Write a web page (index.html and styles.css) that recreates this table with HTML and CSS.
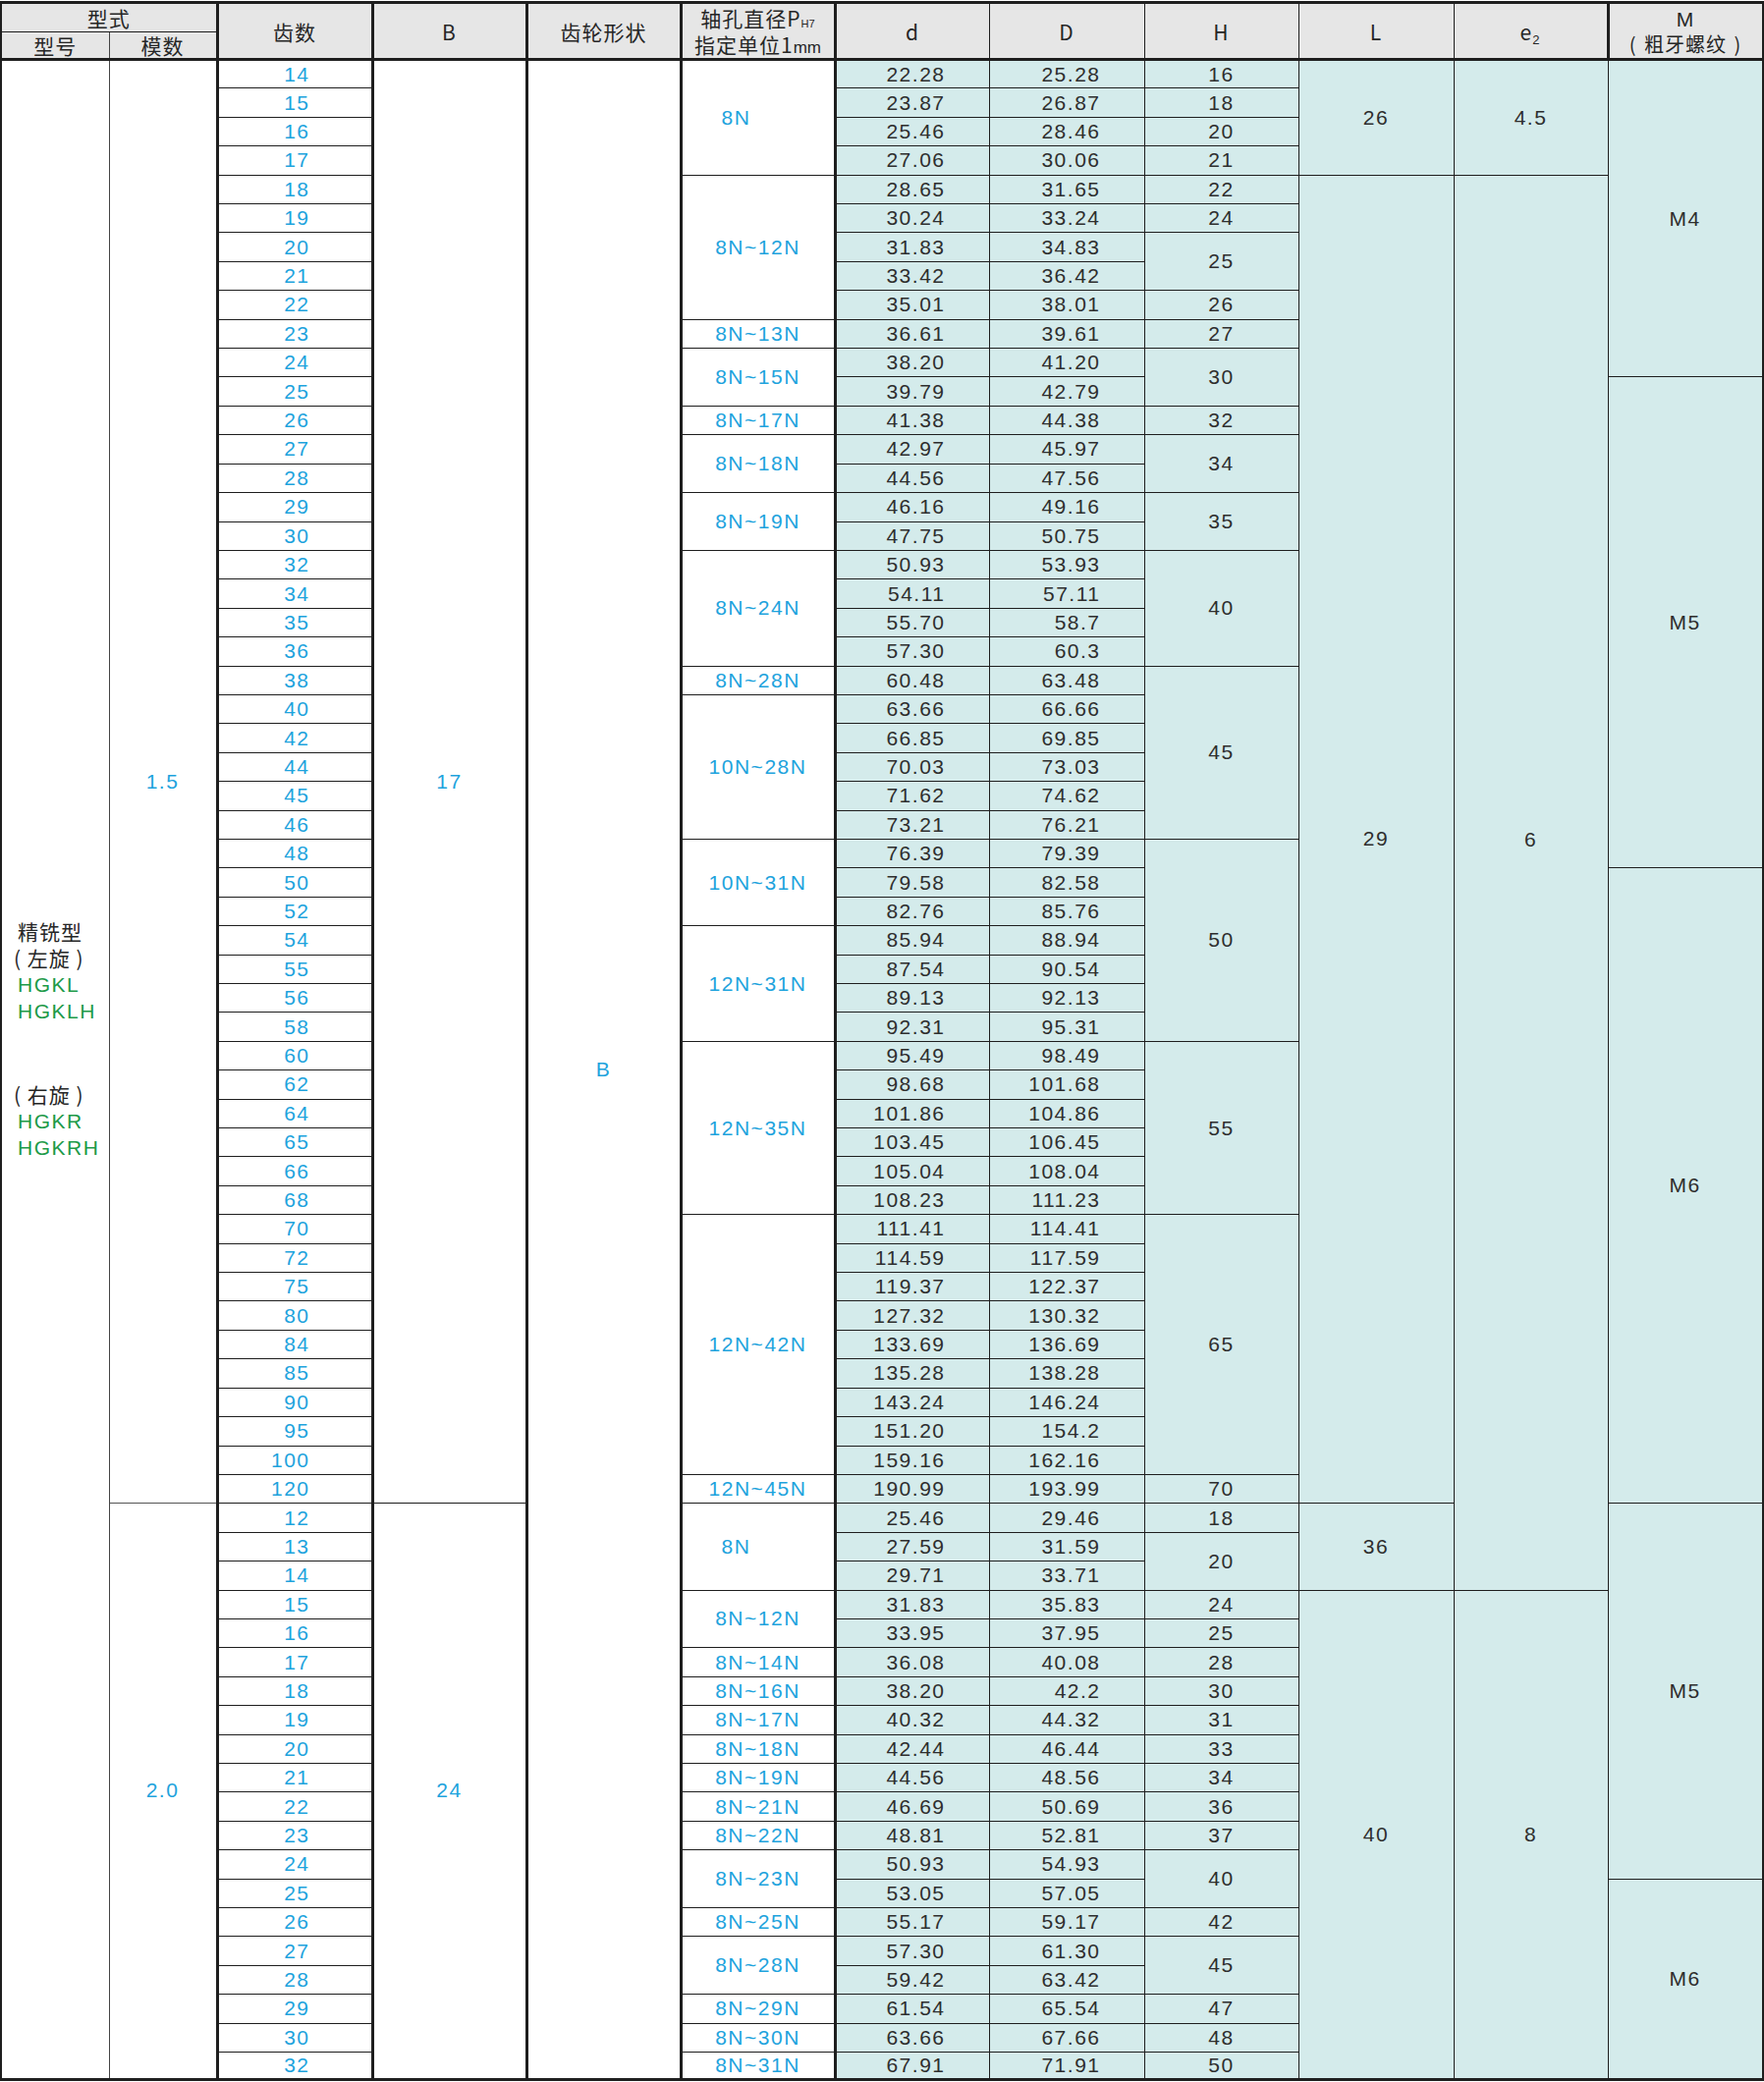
FILE: index.html
```html
<!DOCTYPE html>
<html lang="zh-CN">
<head>
<meta charset="utf-8">
<title>齿轮规格表</title>
<link rel="stylesheet" href="styles.css">
</head>
<body>
<table class="spec">
<colgroup>
<col class="w-type"><col class="w-mod"><col class="w-wide"><col class="w-std"><col class="w-std"><col class="w-std"><col class="w-std"><col class="w-wide"><col class="w-std"><col class="w-wide"><col class="w-std"><col class="w-wide">
</colgroup>
<thead>
<tr class="h1">
<th colspan="2" class="h-top">型式</th>
<th rowspan="2" class="thick">齿数</th>
<th rowspan="2" class="thick">B</th>
<th rowspan="2" class="thick">齿轮形状</th>
<th rowspan="2" class="thick h-bore">轴孔直径P<span class="sub">H7</span><br>指定单位1<span class="mm">mm</span></th>
<th rowspan="2">d</th>
<th rowspan="2">D</th>
<th rowspan="2">H</th>
<th rowspan="2">L</th>
<th rowspan="2">e<span class="sub2">2</span></th>
<th rowspan="2" class="thick h-m"><span class="m-top">M</span><br><span class="m-sub">( 粗牙螺纹 )</span></th>
</tr>
<tr class="h2">
<th class="thin-r">型号</th>
<th>模数</th>
</tr>
</thead>
<tbody>
<tr><td rowspan="70" class="type"><div class="type-text"><div>精铣型</div><div class="paren">( 左旋 )</div><div class="grn">HGKL</div><div class="grn">HGKLH</div><div class="paren gap">( 右旋 )</div><div class="grn">HGKR</div><div class="grn">HGKRH</div></div></td><td rowspan="50" class="mod blu">1.5</td><td class="tn">14</td><td rowspan="50" class="bcol blu">17</td><td rowspan="70" class="shape blu">B</td><td rowspan="4" class="bore solo">8N</td><td class="nd">22.28</td><td class="nd">25.28</td><td class="h">16</td><td rowspan="4" class="c">26</td><td rowspan="4" class="c">4.5</td><td rowspan="11" class="m">M4</td></tr>
<tr><td class="tn">15</td><td class="nd">23.87</td><td class="nd">26.87</td><td class="h">18</td></tr>
<tr><td class="tn">16</td><td class="nd">25.46</td><td class="nd">28.46</td><td class="h">20</td></tr>
<tr><td class="tn">17</td><td class="nd">27.06</td><td class="nd">30.06</td><td class="h">21</td></tr>
<tr><td class="tn">18</td><td rowspan="5" class="bore">8N~12N</td><td class="nd">28.65</td><td class="nd">31.65</td><td class="h">22</td><td rowspan="46" class="c">29</td><td rowspan="49" class="c e6">6</td></tr>
<tr><td class="tn">19</td><td class="nd">30.24</td><td class="nd">33.24</td><td class="h">24</td></tr>
<tr><td class="tn">20</td><td class="nd">31.83</td><td class="nd">34.83</td><td rowspan="2" class="h">25</td></tr>
<tr><td class="tn">21</td><td class="nd">33.42</td><td class="nd">36.42</td></tr>
<tr><td class="tn">22</td><td class="nd">35.01</td><td class="nd">38.01</td><td class="h">26</td></tr>
<tr><td class="tn">23</td><td class="bore">8N~13N</td><td class="nd">36.61</td><td class="nd">39.61</td><td class="h">27</td></tr>
<tr><td class="tn">24</td><td rowspan="2" class="bore">8N~15N</td><td class="nd">38.20</td><td class="nd">41.20</td><td rowspan="2" class="h">30</td></tr>
<tr><td class="tn">25</td><td class="nd">39.79</td><td class="nd">42.79</td><td rowspan="17" class="m">M5</td></tr>
<tr><td class="tn">26</td><td class="bore">8N~17N</td><td class="nd">41.38</td><td class="nd">44.38</td><td class="h">32</td></tr>
<tr><td class="tn">27</td><td rowspan="2" class="bore">8N~18N</td><td class="nd">42.97</td><td class="nd">45.97</td><td rowspan="2" class="h">34</td></tr>
<tr><td class="tn">28</td><td class="nd">44.56</td><td class="nd">47.56</td></tr>
<tr><td class="tn">29</td><td rowspan="2" class="bore">8N~19N</td><td class="nd">46.16</td><td class="nd">49.16</td><td rowspan="2" class="h">35</td></tr>
<tr><td class="tn">30</td><td class="nd">47.75</td><td class="nd">50.75</td></tr>
<tr><td class="tn">32</td><td rowspan="4" class="bore">8N~24N</td><td class="nd">50.93</td><td class="nd">53.93</td><td rowspan="4" class="h">40</td></tr>
<tr><td class="tn">34</td><td class="nd">54.11</td><td class="nd">57.11</td></tr>
<tr><td class="tn">35</td><td class="nd">55.70</td><td class="nd">58.7</td></tr>
<tr><td class="tn">36</td><td class="nd">57.30</td><td class="nd">60.3</td></tr>
<tr><td class="tn">38</td><td class="bore">8N~28N</td><td class="nd">60.48</td><td class="nd">63.48</td><td rowspan="6" class="h">45</td></tr>
<tr><td class="tn">40</td><td rowspan="5" class="bore">10N~28N</td><td class="nd">63.66</td><td class="nd">66.66</td></tr>
<tr><td class="tn">42</td><td class="nd">66.85</td><td class="nd">69.85</td></tr>
<tr><td class="tn">44</td><td class="nd">70.03</td><td class="nd">73.03</td></tr>
<tr><td class="tn">45</td><td class="nd">71.62</td><td class="nd">74.62</td></tr>
<tr><td class="tn">46</td><td class="nd">73.21</td><td class="nd">76.21</td></tr>
<tr><td class="tn">48</td><td rowspan="3" class="bore">10N~31N</td><td class="nd">76.39</td><td class="nd">79.39</td><td rowspan="7" class="h">50</td></tr>
<tr><td class="tn">50</td><td class="nd">79.58</td><td class="nd">82.58</td><td rowspan="22" class="m">M6</td></tr>
<tr><td class="tn">52</td><td class="nd">82.76</td><td class="nd">85.76</td></tr>
<tr><td class="tn">54</td><td rowspan="4" class="bore">12N~31N</td><td class="nd">85.94</td><td class="nd">88.94</td></tr>
<tr><td class="tn">55</td><td class="nd">87.54</td><td class="nd">90.54</td></tr>
<tr><td class="tn">56</td><td class="nd">89.13</td><td class="nd">92.13</td></tr>
<tr><td class="tn">58</td><td class="nd">92.31</td><td class="nd">95.31</td></tr>
<tr><td class="tn">60</td><td rowspan="6" class="bore">12N~35N</td><td class="nd">95.49</td><td class="nd">98.49</td><td rowspan="6" class="h">55</td></tr>
<tr><td class="tn">62</td><td class="nd">98.68</td><td class="nd">101.68</td></tr>
<tr><td class="tn">64</td><td class="nd">101.86</td><td class="nd">104.86</td></tr>
<tr><td class="tn">65</td><td class="nd">103.45</td><td class="nd">106.45</td></tr>
<tr><td class="tn">66</td><td class="nd">105.04</td><td class="nd">108.04</td></tr>
<tr><td class="tn">68</td><td class="nd">108.23</td><td class="nd">111.23</td></tr>
<tr><td class="tn">70</td><td rowspan="9" class="bore">12N~42N</td><td class="nd">111.41</td><td class="nd">114.41</td><td rowspan="9" class="h">65</td></tr>
<tr><td class="tn">72</td><td class="nd">114.59</td><td class="nd">117.59</td></tr>
<tr><td class="tn">75</td><td class="nd">119.37</td><td class="nd">122.37</td></tr>
<tr><td class="tn">80</td><td class="nd">127.32</td><td class="nd">130.32</td></tr>
<tr><td class="tn">84</td><td class="nd">133.69</td><td class="nd">136.69</td></tr>
<tr><td class="tn">85</td><td class="nd">135.28</td><td class="nd">138.28</td></tr>
<tr><td class="tn">90</td><td class="nd">143.24</td><td class="nd">146.24</td></tr>
<tr><td class="tn">95</td><td class="nd">151.20</td><td class="nd">154.2</td></tr>
<tr><td class="tn">100</td><td class="nd">159.16</td><td class="nd">162.16</td></tr>
<tr><td class="tn">120</td><td class="bore">12N~45N</td><td class="nd">190.99</td><td class="nd">193.99</td><td class="h">70</td></tr>
<tr><td rowspan="20" class="mod blu">2.0</td><td class="tn">12</td><td rowspan="20" class="bcol blu">24</td><td rowspan="3" class="bore solo">8N</td><td class="nd">25.46</td><td class="nd">29.46</td><td class="h">18</td><td rowspan="3" class="c">36</td><td rowspan="13" class="m">M5</td></tr>
<tr><td class="tn">13</td><td class="nd">27.59</td><td class="nd">31.59</td><td rowspan="2" class="h">20</td></tr>
<tr><td class="tn">14</td><td class="nd">29.71</td><td class="nd">33.71</td></tr>
<tr><td class="tn">15</td><td rowspan="2" class="bore">8N~12N</td><td class="nd">31.83</td><td class="nd">35.83</td><td class="h">24</td><td rowspan="17" class="c">40</td><td rowspan="17" class="c">8</td></tr>
<tr><td class="tn">16</td><td class="nd">33.95</td><td class="nd">37.95</td><td class="h">25</td></tr>
<tr><td class="tn">17</td><td class="bore">8N~14N</td><td class="nd">36.08</td><td class="nd">40.08</td><td class="h">28</td></tr>
<tr><td class="tn">18</td><td class="bore">8N~16N</td><td class="nd">38.20</td><td class="nd">42.2</td><td class="h">30</td></tr>
<tr><td class="tn">19</td><td class="bore">8N~17N</td><td class="nd">40.32</td><td class="nd">44.32</td><td class="h">31</td></tr>
<tr><td class="tn">20</td><td class="bore">8N~18N</td><td class="nd">42.44</td><td class="nd">46.44</td><td class="h">33</td></tr>
<tr><td class="tn">21</td><td class="bore">8N~19N</td><td class="nd">44.56</td><td class="nd">48.56</td><td class="h">34</td></tr>
<tr><td class="tn">22</td><td class="bore">8N~21N</td><td class="nd">46.69</td><td class="nd">50.69</td><td class="h">36</td></tr>
<tr><td class="tn">23</td><td class="bore">8N~22N</td><td class="nd">48.81</td><td class="nd">52.81</td><td class="h">37</td></tr>
<tr><td class="tn">24</td><td rowspan="2" class="bore">8N~23N</td><td class="nd">50.93</td><td class="nd">54.93</td><td rowspan="2" class="h">40</td></tr>
<tr><td class="tn">25</td><td class="nd">53.05</td><td class="nd">57.05</td><td rowspan="7" class="m">M6</td></tr>
<tr><td class="tn">26</td><td class="bore">8N~25N</td><td class="nd">55.17</td><td class="nd">59.17</td><td class="h">42</td></tr>
<tr><td class="tn">27</td><td rowspan="2" class="bore">8N~28N</td><td class="nd">57.30</td><td class="nd">61.30</td><td rowspan="2" class="h">45</td></tr>
<tr><td class="tn">28</td><td class="nd">59.42</td><td class="nd">63.42</td></tr>
<tr><td class="tn">29</td><td class="bore">8N~29N</td><td class="nd">61.54</td><td class="nd">65.54</td><td class="h">47</td></tr>
<tr><td class="tn">30</td><td class="bore">8N~30N</td><td class="nd">63.66</td><td class="nd">67.66</td><td class="h">48</td></tr>
<tr class="last"><td class="tn">32</td><td class="bore">8N~31N</td><td class="nd">67.91</td><td class="nd">71.91</td><td class="h">50</td></tr>
</tbody>
</table>
</body>
</html>
```

FILE: styles.css
```css
html, body {
  margin: 0;
  padding: 0;
  background: #ffffff;
}

body {
  padding-top: 1px;
  font-family: "Liberation Sans", "Noto Sans CJK SC", sans-serif;
  color: #2e2e2e;
}

.spec {
  width: 1796px;
  table-layout: fixed;
  border-collapse: collapse;
  border: 3px solid #1e1e1e;
  border-left-width: 2px;
}

.w-type { width: 110px; }
.w-mod { width: 110px; }
.w-wide { width: 158px; }
.w-std { width: 157px; }

.spec th,
.spec td {
  padding: 0;
  border: 1px solid #1e1e1e;
  text-align: center;
  vertical-align: middle;
  font-weight: normal;
  white-space: nowrap;
}

/* header */
.spec th {
  background: #e6e6e6;
  font-family: "Noto Sans CJK SC", "Liberation Sans", sans-serif;
  font-size: 21px;
  letter-spacing: 1px;
  color: #262626;
  line-height: 26px;
}

.spec thead tr:last-child th,
.spec thead th[rowspan] {
  border-bottom: 3px solid #1e1e1e;
}

.h1 { height: 30px; }
.h2 { height: 28px; }

.spec th.thick { border-left: 3px solid #1e1e1e; border-right: 3px solid #1e1e1e; }
.spec th.thin-r { border-right: 1px solid #444; }
.spec th.h-top { border-bottom: 1px solid #1e1e1e; }
.spec th.h-bore { line-height: 27px; }
.spec th.h-m { line-height: 25px; }

.m-top {
  font-family: "Liberation Sans", sans-serif;
  font-size: 21px;
}

.m-sub {
  font-size: 20px;
  letter-spacing: 1px;
  word-spacing: 2px;
}

.sub {
  font-size: 11px;
  line-height: 0;
  letter-spacing: 0;
  vertical-align: -1px;
  font-family: "Liberation Sans", sans-serif;
}

.mm {
  font-size: 17px;
  line-height: 0;
  letter-spacing: 0;
  font-family: "Liberation Sans", sans-serif;
}

.sub2 {
  font-size: 13px;
  line-height: 0;
  vertical-align: -4px;
  font-family: "Liberation Sans", sans-serif;
}

/* body */
.spec tbody tr { height: 29.41px; }
.spec tbody tr.last { height: 27.6px; }

.spec td {
  font-size: 21px;
  letter-spacing: 1.5px;
  line-height: 24px;
  background: #ffffff;
}

.spec td.blu { color: #1ea3dd; }

.spec td.type {
  text-align: left;
  border-right: 1px solid #444;
  vertical-align: middle;
}

.type-text {
  padding-left: 16px;
  padding-bottom: 60px;
  font-family: "Noto Sans CJK SC", "Liberation Sans", sans-serif;
  font-size: 21px;
  line-height: 27px;
  letter-spacing: 1px;
  color: #262626;
}

.type-text .paren {
  margin-left: -4px;
}

.type-text .gap {
  margin-top: 58px;
}

.type-text .grn {
  font-family: "Liberation Sans", sans-serif;
  font-size: 21px;
  letter-spacing: 1.5px;
  color: #1d9a48;
}

.spec td.mod {
  border-left: 1px solid #444;
  border-right: 3px solid #1e1e1e;
  border-bottom: 1px solid #555;
}

.spec td.tn {
  color: #1ea3dd;
  text-align: right;
  padding-right: 62px;
  border-left: 3px solid #1e1e1e;
  border-right: 3px solid #1e1e1e;
}

.spec td.bcol { border-right: 3px solid #1e1e1e; }

.spec td.shape { border-left: 3px solid #1e1e1e; border-right: 3px solid #1e1e1e; }

.spec td.bore {
  color: #1ea3dd;
  border-left: 3px solid #1e1e1e;
  border-right: 3px solid #1e1e1e;
}

.spec td.bore.solo { padding-right: 44px; }

.spec td.nd,
.spec td.h,
.spec td.c,
.spec td.m {
  background: #d4ebeb;
  color: #2e2e2e;
}

.spec td.nd {
  text-align: right;
  padding-right: 44px;
}

.spec td.e6 { padding-bottom: 88px; }

.spec td.m { border-right: 3px solid #1e1e1e; }
```
